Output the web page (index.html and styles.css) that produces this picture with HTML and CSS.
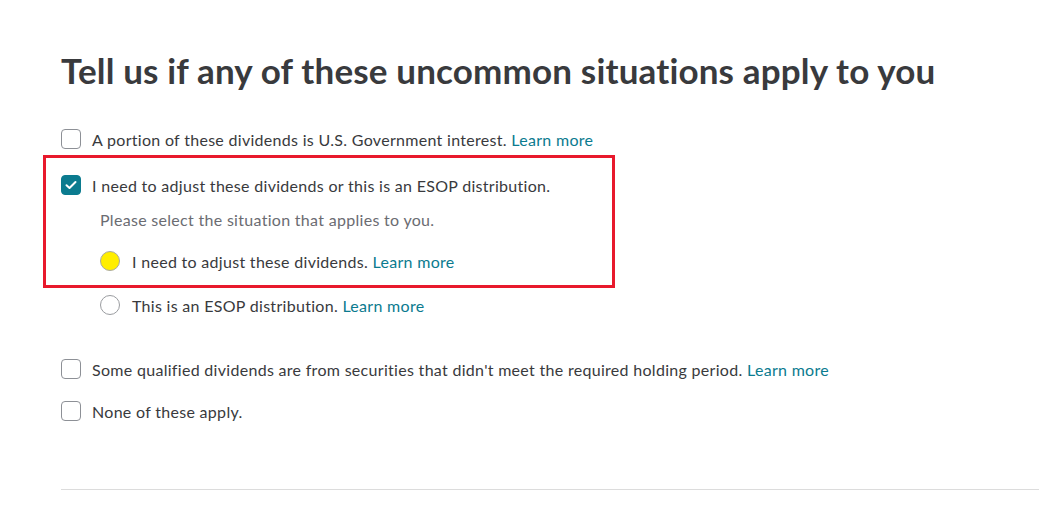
FILE: index.html
```html
<!DOCTYPE html>
<html lang="en">

<head>
    <meta charset="UTF-8">
    <meta name="viewport" content="width=device-width, initial-scale=1.0">
    <title>Uncommon situations</title>
    <link rel="stylesheet" href="styles.css">
</head>

<body>
    <main class="page">
        <h1 class="title">Tell us if any of these uncommon situations apply to you</h1>

        <div class="option first">
            <span class="checkbox"></span>
            <span class="label">A portion of these dividends is U.S. Government interest. <a href="#">Learn more</a></span>
        </div>

        <!-- highlighted group -->
        <div class="highlight">
            <div class="option">
                <span class="checkbox checked">
                    <svg width="12" height="10" viewBox="0 0 12 10"><path d="M1.5 5.2 L4.5 8 L10.5 2" fill="none" stroke="#fff" stroke-width="2" stroke-linecap="round" stroke-linejoin="round"/></svg>
                </span>
                <span class="label">I need to adjust these dividends or this is an ESOP distribution.</span>
            </div>
            <p class="hint">Please select the situation that applies to you.</p>
            <div class="option radio-row">
                <span class="radio selected"></span>
                <span class="label">I need to adjust these dividends. <a href="#">Learn more</a></span>
            </div>
        </div>

        <div class="option radio-row after-box">
            <span class="radio"></span>
            <span class="label">This is an ESOP distribution. <a href="#">Learn more</a></span>
        </div>

        <div class="option spaced">
            <span class="checkbox"></span>
            <span class="label">Some qualified dividends are from securities that didn't meet the required holding period. <a href="#">Learn more</a></span>
        </div>

        <div class="option next">
            <span class="checkbox"></span>
            <span class="label">None of these apply.</span>
        </div>

        <hr class="divider">
    </main>
</body>

</html>
```

FILE: styles.css
```css
body {
    margin: 0;
    background-color: #fff;
    font-family: Lato, "Noto Sans", sans-serif;
    color: #393a3d;
}

.page {
    padding: 0 0 0 61px;
}

.title {
    margin: 0;
    padding-top: 48px;
    font-size: 35px;
    line-height: 44px;
    font-weight: 700;
    letter-spacing: 0.16px;
    color: #393a3d;
}

.option {
    display: flex;
    align-items: center;
    gap: 11px;
    height: 24px;
    font-size: 16px;
    letter-spacing: 0.3px;
}

.option.first {
    margin-top: 35px;
}

.label a {
    color: #0b7b8f;
    text-decoration: none;
}

.checkbox {
    box-sizing: border-box;
    width: 20px;
    height: 20px;
    flex: none;
    border: 1px solid #8d9096;
    border-radius: 4px;
    background-color: #fff;
    display: flex;
    align-items: center;
    justify-content: center;
}

.checkbox.checked {
    border-color: #0b7b8f;
    background-color: #0b7b8f;
}

.radio {
    box-sizing: border-box;
    width: 20px;
    height: 20px;
    flex: none;
    border: 1px solid #9a9ca0;
    border-radius: 50%;
    background-color: #fff;
}

.radio.selected {
    background-color: #ffee00;
    border-color: #a9a9a2;
}

.radio-row {
    padding-left: 39px;
}

.radio-row .label {
    margin-left: 1px;
}

/* red outline around the second question */
.highlight {
    box-sizing: border-box;
    width: 572px;
    margin: 4px 0 0 -18px;
    padding: 15px 0 12px 15px;
    border: 3px solid #e8192c;
}

.hint {
    margin: 13px 0 0 39px;
    font-size: 16px;
    line-height: 20px;
    letter-spacing: 0.3px;
    color: #6b6c72;
}

.highlight .radio-row {
    margin-top: 19px;
}

.after-box {
    margin-top: 5px;
}

.spaced {
    margin-top: 40px;
}

.next {
    margin-top: 18px;
}

.divider {
    margin: 66px 0 0 0;
    border: none;
    border-top: 1px solid #dcdcdc;
}
```
